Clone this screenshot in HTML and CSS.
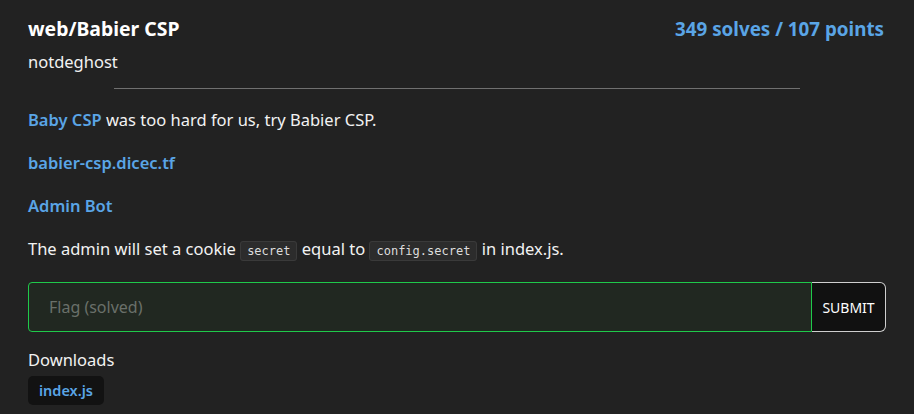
FILE: index.html
```html
<!DOCTYPE html>
<html>
<head>
<meta charset="utf-8">
<link rel="stylesheet" href="styles.css">
</head>
<body>
<div class="card">
  <div class="header">
    <div class="titles">
      <div class="title">web/Babier CSP</div>
      <div class="author">notdeghost</div>
    </div>
    <div class="score">349 solves / 107 points</div>
  </div>
  <hr class="rule">
  <div class="desc">
    <p><a class="link semi">Baby CSP</a> was too hard for us, try Babier CSP.</p>
    <p><a class="link semi">babier-csp.dicec.tf</a></p>
    <p><a class="link semi">Admin Bot</a></p>
    <p>The admin will set a cookie <code>secret</code> equal to <code>config.secret</code> in index.js.</p>
  </div>
  <form class="flag">
    <input class="flag-input" type="text" placeholder="Flag (solved)">
    <button class="submit" type="button">SUBMIT</button>
  </form>
  <div class="downloads">
    <div class="dl-title">Downloads</div>
    <a class="dl-tag">index.js</a>
  </div>
</div>
</body>
</html>
```
FILE: styles.css
```css
html, body {
  margin: 0;
  background: #222222;
  color: #f2f2f2;
  font-family: "Noto Sans", "Open Sans", sans-serif;
  font-size: 16.5px;
}
.card {
  padding: 16px 28px 0 28px;
  display: flex;
  flex-direction: column;
}
.header {
  display: flex;
  justify-content: space-between;
  align-items: flex-start;
}
.title {
  font-weight: 700;
  font-size: 19.4px;
  line-height: 26px;
  color: #ffffff;
}
.author {
  margin-top: 8px;
  line-height: 24px;
}
.score {
  font-weight: 700;
  font-size: 18.8px;
  line-height: 26px;
  color: #5aa5e6;
  margin-right: 2px;
}
.rule {
  width: 80%;
  margin: 14px auto 0 auto;
  border: none;
  border-top: 1px solid #707070;
  height: 0;
}
.desc p {
  margin: 19px 0 0 0;
  line-height: 24px;
}
.link {
  color: #5aa5e6;
  text-decoration: none;
}
.semi { font-weight: 600; }
code {
  font-family: "DejaVu Sans Mono", monospace;
  font-size: 12px;
  background: #2c2c2c;
  border: 1px solid #3a3a3a;
  border-radius: 3px;
  padding: 2px 6px;
  color: #dddddd;
}
.flag {
  display: flex;
  margin-top: 19px;
  height: 50px;
}
.flag-input {
  flex: 1;
  background: #212821;
  border: 1px solid #1fc94a;
  border-radius: 4px 0 0 4px;
  color: #eee;
  font-family: inherit;
  font-size: 16px;
  padding: 0 20px;
  outline: none;
}
.flag-input::placeholder { color: #6a706a; }
.submit {
  width: 74px;
  background: #111111;
  color: #ffffff;
  border: 1px solid #cfcfcf;
  border-left: none;
  border-radius: 0 6px 6px 0;
  font-family: inherit;
  font-size: 14px;
  padding: 0;
}
.downloads {
  margin-top: 16px;
  display: flex;
  flex-direction: column;
  align-items: flex-start;
}
.dl-title { line-height: 24px; }
.dl-tag {
  margin-top: 4px;
  background: #121212;
  color: #5aa5e6;
  font-weight: 600;
  border-radius: 5px;
  padding: 3px 11px;
  line-height: 23px;
  font-size: 14.5px;
}
```
